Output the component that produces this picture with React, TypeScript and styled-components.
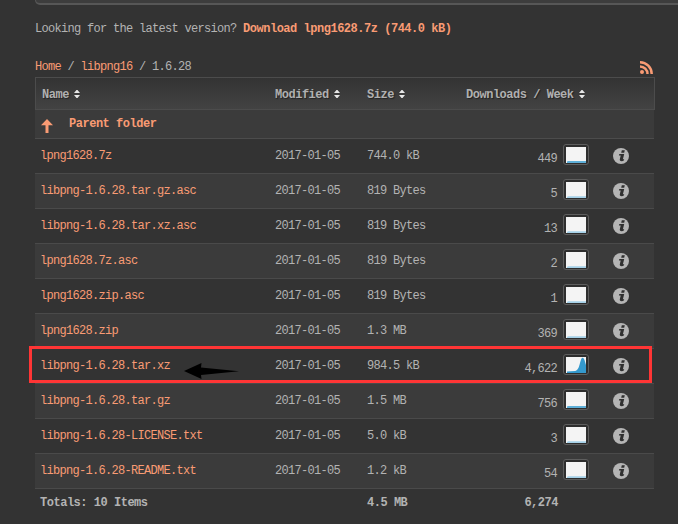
import React from "react";
import styled, { createGlobalStyle } from "styled-components";

const GlobalStyle = createGlobalStyle`
  * { box-sizing: border-box; }
  body {
    margin: 0;
    background: #333;
    color: #b3b3b3;
    font-family: "Liberation Mono", "Noto Sans CJK SC", monospace;
    font-size: 12px;
    letter-spacing: -0.7px;
    line-height: 16px;
    overflow: hidden;
  }
`;

const Page = styled.div`
  position: relative;
  width: 678px;
  height: 524px;
  padding-left: 35px;
  background: #333;
  overflow: hidden;
  white-space: pre;
`;

const PanelEdge = styled.div`
  height: 5px;
  margin-right: -10px;
  background: #3d3d3d;
  border: solid #575757;
  border-width: 0 0 2px 1px;
  border-bottom-left-radius: 5px;
`;

const Latest = styled.p`
  margin: 16px 0 0;
  height: 16px;
`;

const Link = styled.a<{ $bold?: boolean }>`
  color: #f99b74;
  text-decoration: none;
  font-weight: ${(p) => (p.$bold ? 700 : 400)};
  letter-spacing: ${(p) => (p.$bold ? "-0.48px" : "-0.7px")};
`;

const Crumbs = styled.nav`
  display: flex;
  justify-content: space-between;
  width: 620px;
  height: 18px;
  margin-top: 22px;
`;

const FeedIcon = styled.svg`
  width: 13px;
  height: 13px;
  margin: 2px 2px 0 0;
`;

const Table = styled.div`
  width: 620px;
`;

const HeaderRow = styled.div`
  display: grid;
  grid-template-columns: 233px 92px 99px 1fr;
  align-items: center;
  height: 33px;
  padding: 2px 0 0 6px;
  border: 1px solid #4c4c4c;
  background: linear-gradient(#333, #434343);
  color: #b0b0b0;
  font-weight: 700;
  letter-spacing: -0.48px;
  text-shadow: 1px 1px 1px #222;
`;

const HeaderCell = styled.div`
  display: flex;
  align-items: center;
  gap: 5px;
`;

const SortIcon = styled.svg`
  width: 6px;
  height: 8px;
  margin-top: -2px;
`;

const ParentRow = styled.div`
  display: flex;
  align-items: center;
  width: 619px;
  height: 29px;
  padding-left: 6px;
  gap: 16px;
  border-bottom: 1px solid #4c4c4c;
  background: #3b3b3b;
`;

const UpIcon = styled.svg`
  width: 12px;
  height: 14px;
  margin-top: 3px;
`;

const FileRow = styled.div<{ $shaded: boolean }>`
  display: grid;
  grid-template-columns: 235px 92px 98px 98px 32px 1fr;
  align-items: center;
  width: 619px;
  height: 35px;
  padding-left: 5px;
  border-bottom: 1px solid #4a4a4a;
  background: ${(p) => (p.$shaded ? "#3b3b3b" : "#333")};
`;

const Count = styled.div`
  padding: 5px 6px 0 0;
  text-align: right;
`;

const ChartFrame = styled.div`
  width: 26px;
  height: 21px;
  padding: 2px;
  margin-top: -3px;
  border: 1px solid #5e5e5e;
  border-radius: 3px;
  background: #2e2e2e;
`;

const ChartSvg = styled.svg`
  display: block;
  margin: 0 auto;
  width: 20px;
  height: 16px;
`;

const InfoIcon = styled.svg`
  width: 16px;
  height: 16px;
  margin-left: 18px;
`;

const TotalsRow = styled.div`
  display: grid;
  grid-template-columns: 235px 92px 98px 98px;
  align-items: center;
  height: 28px;
  padding-left: 5px;
  font-weight: 700;
  letter-spacing: -0.48px;
`;

const Sum = styled.div`
  padding-right: 5px;
  text-align: right;
`;

const Highlight = styled.div`
  position: absolute;
  left: 29px;
  top: 346px;
  width: 623px;
  height: 37px;
  border: 3px solid #ff3535;
`;

const Arrow = styled.svg`
  position: absolute;
  left: 184px;
  top: 362px;
  width: 56px;
  height: 18px;
`;

type FileItem = {
  name: string;
  size: string;
  count: string;
  trend: "peak" | "strong" | "faint";
};

const files: FileItem[] = [
  { name: "lpng1628.7z", size: "744.0 kB", count: "449", trend: "strong" },
  { name: "libpng-1.6.28.tar.gz.asc", size: "819 Bytes", count: "5", trend: "faint" },
  { name: "libpng-1.6.28.tar.xz.asc", size: "819 Bytes", count: "13", trend: "faint" },
  { name: "lpng1628.7z.asc", size: "819 Bytes", count: "2", trend: "faint" },
  { name: "lpng1628.zip.asc", size: "819 Bytes", count: "1", trend: "faint" },
  { name: "lpng1628.zip", size: "1.3 MB", count: "369", trend: "faint" },
  { name: "libpng-1.6.28.tar.xz", size: "984.5 kB", count: "4,622", trend: "peak" },
  { name: "libpng-1.6.28.tar.gz", size: "1.5 MB", count: "756", trend: "strong" },
  { name: "libpng-1.6.28-LICENSE.txt", size: "5.0 kB", count: "3", trend: "faint" },
  { name: "libpng-1.6.28-README.txt", size: "1.2 kB", count: "54", trend: "faint" },
];

const Sort = () => (
  <SortIcon viewBox="0 0 6 8">
    <path d="M2.500 0h1L6 3H0zM0 5h6L3.500 8h-1z" fill="#e6e6e6" />
  </SortIcon>
);

const Chart = ({ trend }: { trend: FileItem["trend"] }) => (
  <ChartFrame>
    <ChartSvg viewBox="0 0 20 16">
      <rect width="20" height="16" fill="#f4f4f4" />
      {trend === "peak" && (
        <path d="M1 16v-1.500l8-.5c3-.5 4-4 5-8C15 2.500 15.600.8 16.500.8s2 1.500 2.500 4L20 8v8z" fill="#3499cd" />
      )}
      {trend === "strong" && <path d="M1 16v-1.500L2 14h18v2z" fill="#5eafd8" />}
      {trend === "faint" && <path d="M1 16v-1l1-.7h18V16z" fill="#a5d1e8" />}
    </ChartSvg>
  </ChartFrame>
);

const Info = () => (
  <InfoIcon viewBox="0 0 16 16">
    <circle cx="8" cy="8" r="8" fill="#b5b5b5" />
    <path
      d="M8.800 2.200h3l-.6 2.500h-3zM6.300 6h4.900L9.900 11.300h1.300l-.4 1.300c-1.400.9-4.600.9-4-1.300l.9-3.800H5.900z"
      fill="#303030"
    />
  </InfoIcon>
);

export default function App() {
  return (
    <>
      <GlobalStyle />
      <Page>
        <PanelEdge />
        <Latest>
          Looking for the latest version? <Link $bold>Download lpng1628.7z (744.0 kB)</Link>
        </Latest>
        <Crumbs>
          <span>
            <Link>Home</Link> / <Link>libpng16</Link> / 1.6.28
          </span>
          <FeedIcon viewBox="0 0 13 13" fill="none" stroke="#f99b74" strokeWidth="2.500">
            <circle cx="2" cy="11" r="2" fill="#f99b74" stroke="none" />
            <path d="M0 5.500A7.500 7.500 0 0 1 7.500 13M0 1.300A11.700 11.700 0 0 1 11.700 13" />
          </FeedIcon>
        </Crumbs>
        <Table>
          <HeaderRow>
            {["Name", "Modified", "Size", "Downloads / Week"].map((label) => (
              <HeaderCell key={label}>
                {label}
                <Sort />
              </HeaderCell>
            ))}
          </HeaderRow>
          <ParentRow>
            <UpIcon viewBox="0 0 12 14">
              <path d="M6 0 12 6.300H7.500V14h-3V6.300H0z" fill="#f99b74" />
            </UpIcon>
            <Link $bold>Parent folder</Link>
          </ParentRow>
          {files.map((file, i) => (
            <FileRow key={file.name} $shaded={i % 2 === 1}>
              <Link>{file.name}</Link>
              <span>2017-01-05</span>
              <span>{file.size}</span>
              <Count>{file.count}</Count>
              <Chart trend={file.trend} />
              <Info />
            </FileRow>
          ))}
          <TotalsRow>
            <span>Totals: 10 Items</span>
            <span />
            <span>4.5 MB</span>
            <Sum>6,274</Sum>
          </TotalsRow>
        </Table>
        <Highlight />
        <Arrow viewBox="0 0 56 18" fill="#000">
          <path d="M0 9 17.500 1 17 5.500 55 9.300 17 13l.5 4z" />
        </Arrow>
      </Page>
    </>
  );
}
